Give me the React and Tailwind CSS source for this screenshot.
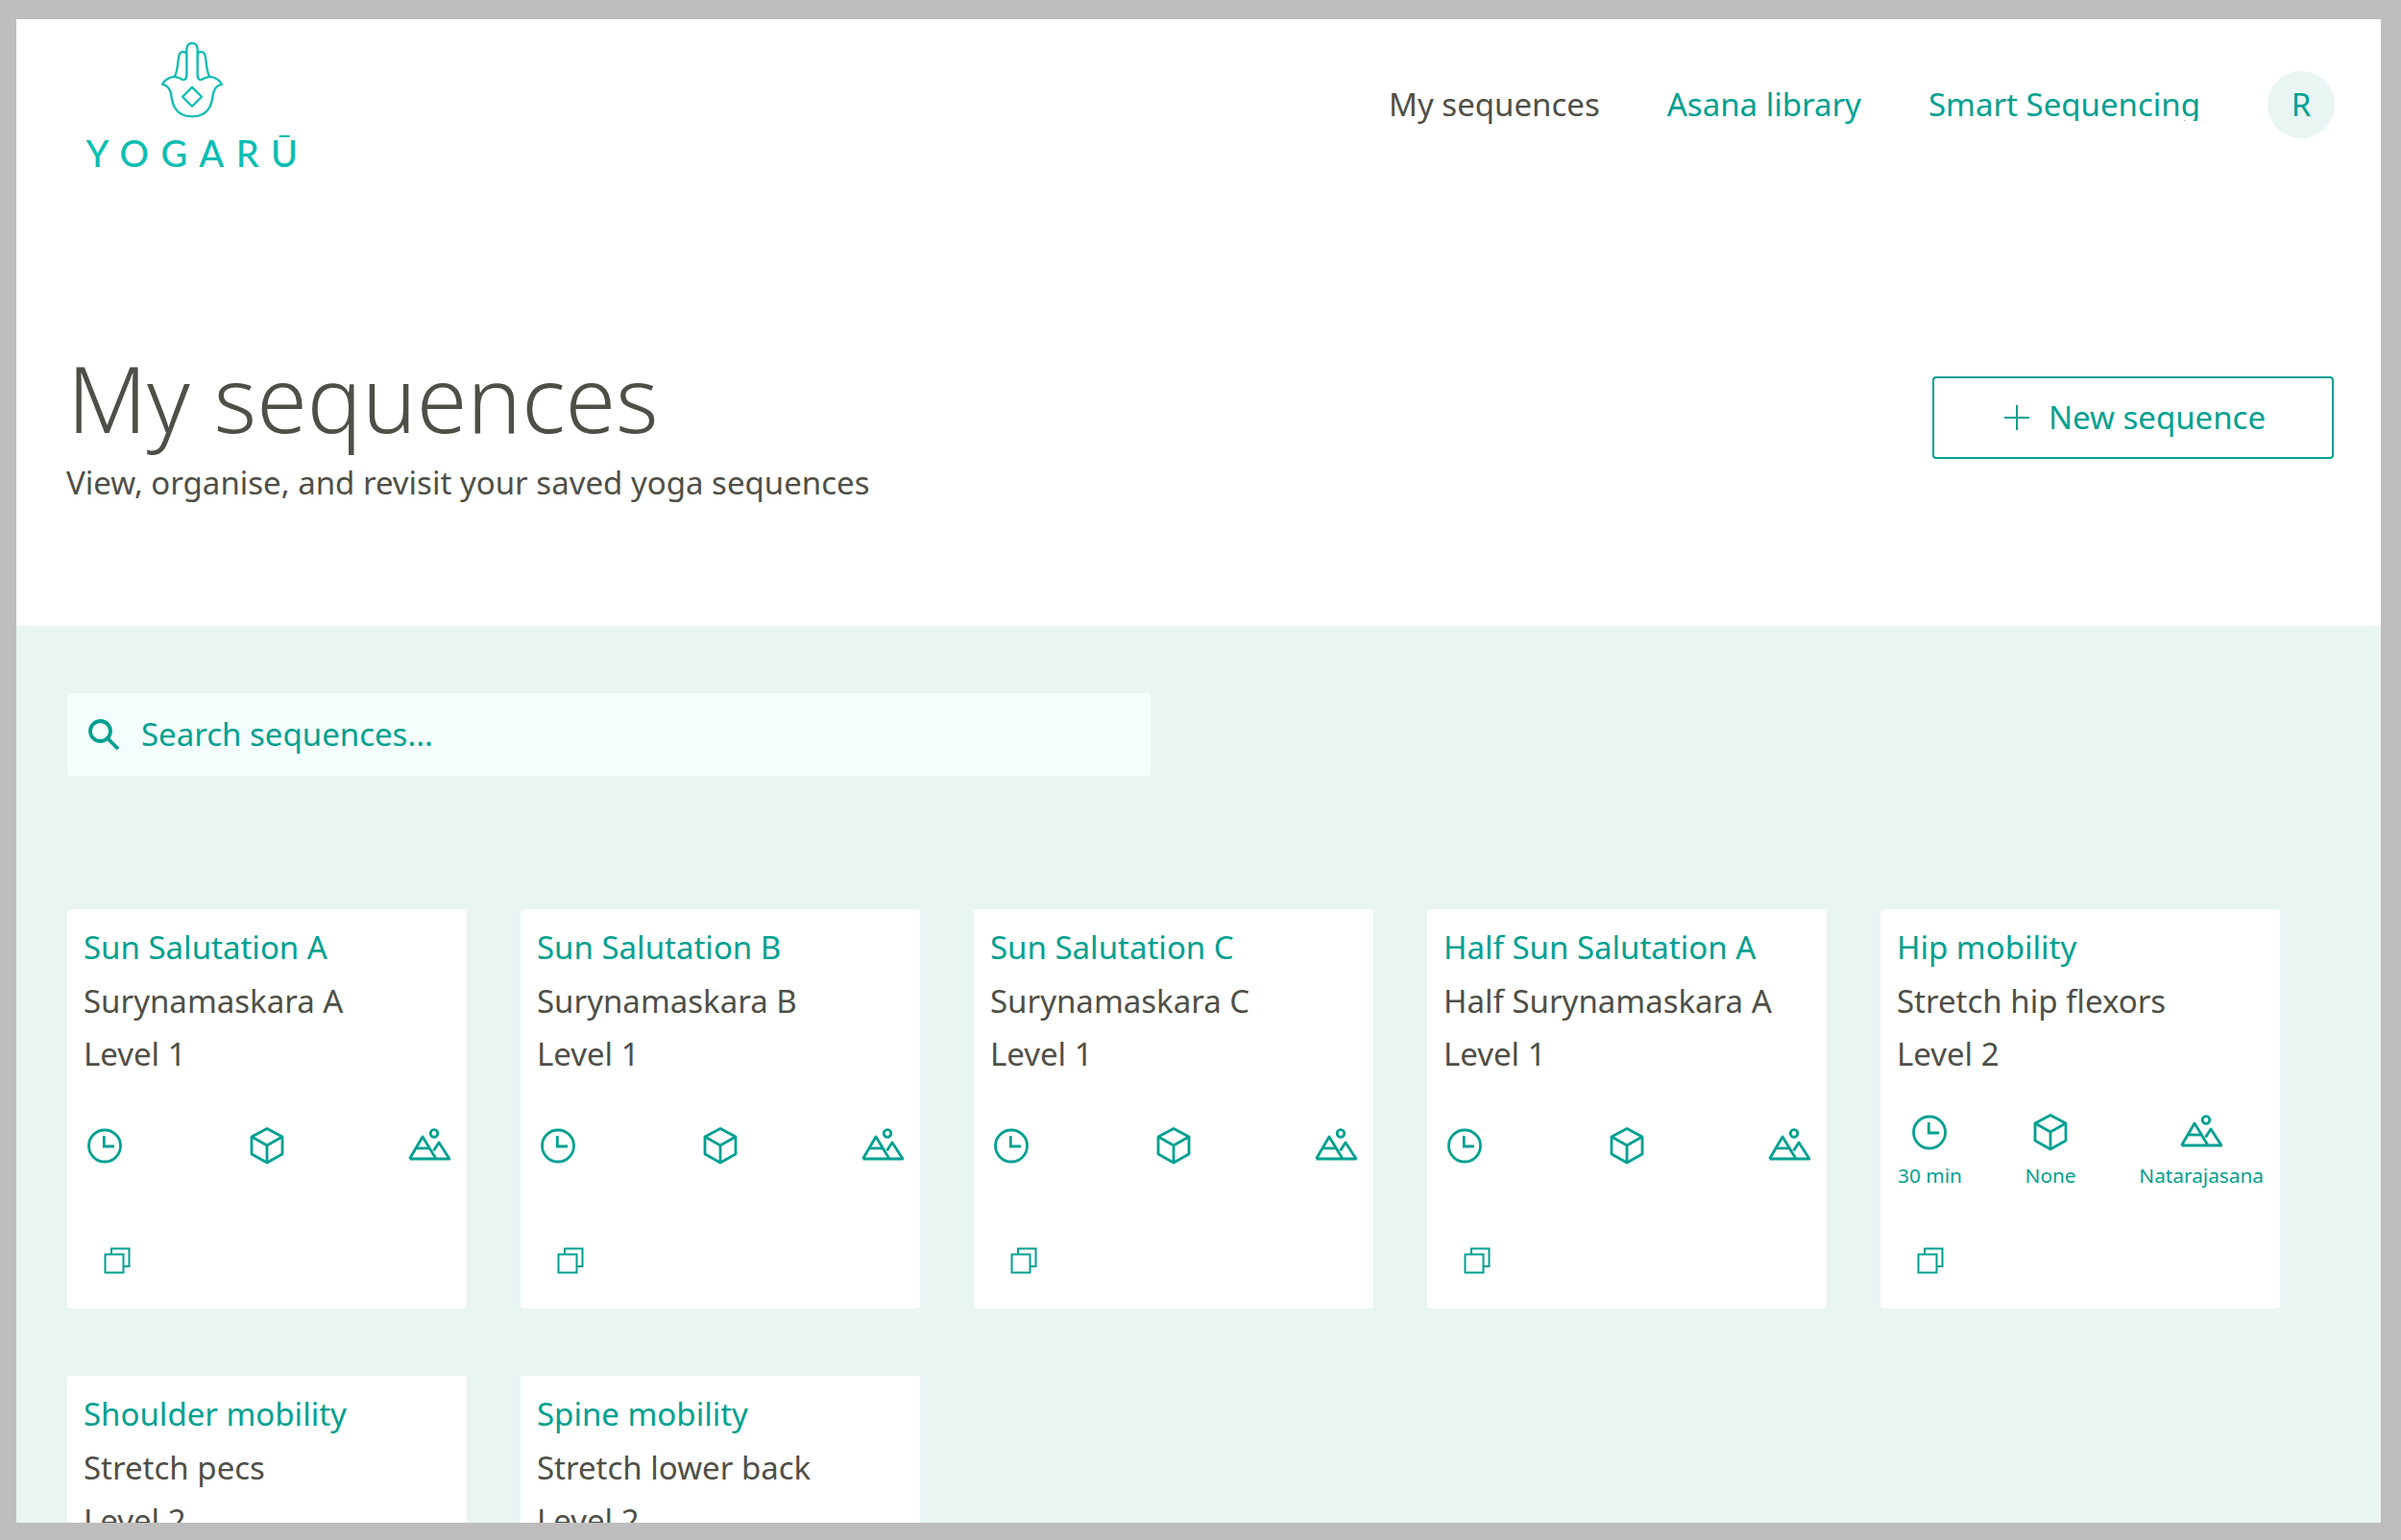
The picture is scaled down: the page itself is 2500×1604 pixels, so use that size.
function Clock() {
  return (
    <svg width="42" height="42" viewBox="0 0 42 42" fill="none" stroke="currentColor" strokeWidth="2.8">
      <circle cx="21" cy="21.5" r="16.5" />
      <path d="M20.3 11V22H31" />
    </svg>
  );
}

function Cube() {
  return (
    <svg width="42" height="42" viewBox="0 0 42 42" fill="none" stroke="currentColor" strokeWidth="2.8" strokeLinejoin="round">
      <path d="M21 3.5 37 12V30L21 39 5 30V12Z" />
      <path d="M5 12 21 21 37 12M21 21V39" />
    </svg>
  );
}

function Mountains() {
  return (
    <svg width="44" height="42" viewBox="0 0 44 42" fill="none" stroke="currentColor" strokeWidth="2.8" strokeLinejoin="round">
      <path d="M1.5 35H43L32 18 26.5 26.5M1.5 35 15 12 29 35" />
      <path d="M8.5 24H22" />
      <circle cx="27" cy="8.5" r="3.8" />
    </svg>
  );
}

function CopyIcon() {
  return (
    <svg width="28" height="28" viewBox="0 0 28 28" fill="none" stroke="currentColor" strokeWidth="2" className="block">
      <rect x="1.5" y="7.5" width="19" height="19" />
      <path d="M8 7V1.5H26.5V20H21" />
    </svg>
  );
}

function Logo() {
  return (
    <div className="w-[240px] flex flex-col items-center text-[#0bbdb3]">
      <svg width="70" height="83" viewBox="495 120 210 250" fill="none" stroke="currentColor" strokeWidth="7" strokeLinecap="round" strokeLinejoin="round">
        <path d="M507 258C516 260 526 266 531 278 537 294 535 312 545 330 556 350 578 359 600 359 622 359 644 350 655 330 665 312 663 294 669 278 674 266 684 260 693 258 686 244 672 236 655 234 648 226 645 200 642 172 640 160 633 156 628 156 621 156 617 162 617 170V148C617 136 609 129 600 129 591 129 583 136 583 148V170C583 162 579 156 572 156 567 156 560 160 558 172 555 200 552 226 545 234 528 236 514 244 507 258Z" />
        <path d="M545 234C556 236 566 240 572 244 580 244 583 236 583 228V170M655 234C644 236 634 240 628 244 620 244 617 236 617 228V170" />
        <path d="M600 267 630 297 600 327 570 297Z" />
      </svg>
      <div className="mt-[15px] ml-[12px] text-[38px] leading-[38px] font-medium tracking-[12.5px] font-['Lato','Noto_Sans',sans-serif]">YOGARŪ</div>
    </div>
  );
}

const items = [
  ["Sun Salutation A", "Surynamaskara A", "Level 1"],
  ["Sun Salutation B", "Surynamaskara B", "Level 1"],
  ["Sun Salutation C", "Surynamaskara C", "Level 1"],
  ["Half Sun Salutation A", "Half Surynamaskara A", "Level 1"],
  ["Hip mobility", "Stretch hip flexors", "Level 2", true],
  ["Shoulder mobility", "Stretch pecs", "Level 2"],
  ["Spine mobility", "Stretch lower back", "Level 2"],
];

function Meta({ icon, label }) {
  return (
    <div className="flex flex-col items-center">
      {icon}
      {label && <span className="mt-[10px] text-[20.8px] leading-[28px]">{label}</span>}
    </div>
  );
}

function Card({ title, sub, level, labels }) {
  return (
    <div className="w-[416px] h-[416px] bg-white rounded-[4px] pt-[12px] flex flex-col">
      <div className="px-[17px] text-[33px] leading-[55px]">
        <div className="mb-[1px] text-[#00a091]">{title}</div>
        <div>{sub}</div>
        <div>{level}</div>
      </div>
      <div className={`flex justify-between items-start text-[#00a091] ${labels ? "pl-[18px] pr-[17px] mt-[33px] h-[80px]" : "pl-[18px] pr-[17px] mt-[47px] h-[66px]"}`}>
        <Meta icon={<Clock />} label={labels && "30 min"} />
        <Meta icon={<Cube />} label={labels && "None"} />
        <Meta icon={<Mountains />} label={labels && "Natarajasana"} />
      </div>
      <div className="mt-[61px] pl-[38px] text-[#00a091]">
        <CopyIcon />
      </div>
    </div>
  );
}

export default function App() {
  return (
    <div className="w-[2500px] h-[1604px] bg-[#bdbdbd] pt-[20px] pl-[17px] pr-[21px] pb-[18px] font-['Noto_Sans',sans-serif] text-[#4f4f47]">
      <div className="h-full bg-white overflow-hidden flex flex-col">
        <header className="h-[632px] shrink-0 flex flex-col pl-[53px] pr-[49px]">
          <div className="flex justify-between items-start">
            <div className="pt-[22px] pl-[10px]"><Logo /></div>
            <nav className="-mr-[1px] flex items-center gap-[70px] pt-[54px] text-[33px] leading-[70px] text-[#00a091]">
              <a className="text-[#4f4f47]">My sequences</a>
              <a>Asana library</a>
              <a className="h-[34px] leading-[34px] overflow-hidden">Smart Sequencing</a>
              <div className="w-[70px] h-[70px] rounded-full bg-[#e8f5f2] flex items-center justify-center text-[33px]">R</div>
            </nav>
          </div>
          <div className="flex justify-between items-start mt-[183px]">
            <div>
              <h1 className="-mt-[7px] text-[95.3px] leading-[120px] font-light">My sequences</h1>
              <p className="-ml-[1px] text-[33px] leading-[46px] mt-[6px]">View, organise, and revisit your saved yoga sequences</p>
            </div>
            <button className="mt-[31px] w-[418px] h-[86px] border-2 border-[#00a091] rounded-[4px] flex items-center justify-center gap-[20px] pl-[4px] text-[33px] text-[#00a091]">
              <svg width="26" height="26" viewBox="0 0 26 26" fill="none" stroke="currentColor" strokeWidth="2"><path d="M13 0V26M0 13H26" /></svg>
              New sequence
            </button>
          </div>
        </header>
        <main className="flex-1 bg-[#e8f5f2] pt-[70px] px-[53px]">
          <div className="w-[1128px] h-[86px] bg-[#f4fffd] rounded-[4px] flex items-center pl-[21px] gap-[22px] text-[33px] text-[#00a091]">
            <svg width="34" height="34" viewBox="0 0 34 34" fill="none" stroke="currentColor" strokeWidth="3.8"><circle cx="13.5" cy="13.5" r="10.5" /><path d="M21 21 32 32" /></svg>
            Search sequences...
          </div>
          <div className="mt-[139px] grid grid-cols-[repeat(5,416px)] gap-x-[56px] gap-y-[70px]">
            {items.map(([t, s, l, lab]) => (
              <Card key={t} title={t} sub={s} level={l} labels={lab} />
            ))}
          </div>
        </main>
      </div>
    </div>
  );
}
